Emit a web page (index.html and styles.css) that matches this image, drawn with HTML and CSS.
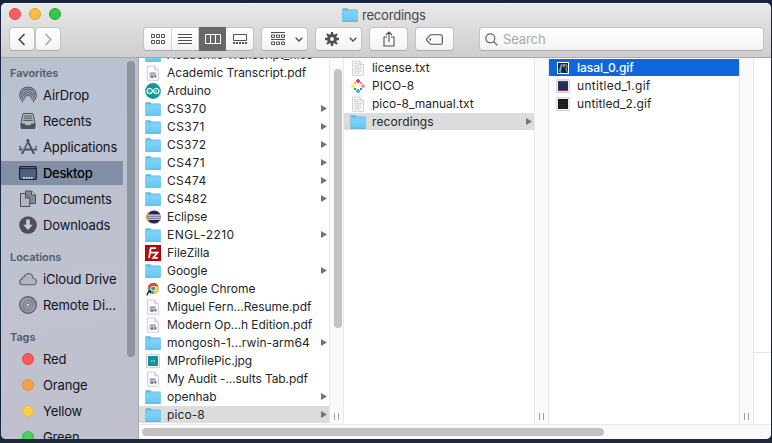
FILE: index.html
```html
<!DOCTYPE html>
<html lang="en">
<head>
<meta charset="utf-8">
<title>recordings</title>
<link rel="stylesheet" href="styles.css">
</head>
<body>
<svg class="defs" width="0" height="0" aria-hidden="true">
  <defs>
    <linearGradient id="fg" x1="0" y1="0" x2="0" y2="1"><stop offset="0" stop-color="#7fd4fa"/><stop offset="1" stop-color="#68c8f6"/></linearGradient>
    <linearGradient id="dg" x1="0" y1="0" x2="1" y2="1"><stop offset="0" stop-color="#a8acb6"/><stop offset=".5" stop-color="#858993"/><stop offset="1" stop-color="#a8acb6"/></linearGradient>
    <symbol id="folder" viewBox="0 0 16 16"><path d="M.3 14V2.2Q.3 1.3 1.2 1.3H5.3L6.6 2.6H15Q15.7 2.6 15.7 3.4V14Q15.7 14.6 15 14.6H1Q.3 14.6.3 14Z" fill="#59b7e6"/><path d="M.8 4.2H15.5V13.4Q15.5 13.9 15 13.9H1.2Q.8 13.9.8 13.4Z" fill="url(#fg)"/><path d="M.4 3.7H15.6" stroke="#93d9f6" stroke-width=".7"/><path d="M.4 14.3H15.6" stroke="#4ba5d1" stroke-width=".7"/></symbol>
    <symbol id="pdf" viewBox="0 0 16 16"><path d="M2.5 1H9.7L13.5 4.8V15.3H2.5Z" fill="#fbfbfb" stroke="#c6c6c6" stroke-width=".8"/><path d="M9.7 1V4.8H13.5" fill="#e6e6e6" stroke="#c2c2c2" stroke-width=".7"/><path d="M4.4 9.6L5 7.5H10.6V9.6Z" fill="#7f9bd0"/><path d="M4.4 9.4H11.6V12H4.4Z" fill="#c3c5cb"/><path d="M5.6 10.4H8.2V12.9H5.6Z" fill="#75777d"/><path d="M9.2 10.2H11.4V12.6H9.2Z" fill="#6583c0"/></symbol>
    <symbol id="txt" viewBox="0 0 16 16"><path d="M2.5 1H9.7L13.5 4.8V15.3H2.5Z" fill="#fafafa" stroke="#c6c6c6" stroke-width=".8"/><path d="M9.7 1V4.8H13.5" fill="#e8e8e8" stroke="#c6c6c6" stroke-width=".7"/><path d="M4.3 3.5H8M4.3 5.4H8.5M4.3 7.3H11.7M4.3 9.2H11M4.3 11.1H11.7M4.3 13H10" stroke="#c3c3c3" stroke-width=".9" stroke-dasharray="2.3 .4"/></symbol>
    <symbol id="arduino" viewBox="0 0 16 16"><circle cx="8" cy="8" r="7.9" fill="#12979c"/><path d="M8 8C6.5 5.9 5.8 5.4 4.7 5.4A2.6 2.6 0 0 0 4.7 10.6C5.8 10.6 6.5 10.1 8 8C9.5 5.9 10.2 5.4 11.3 5.4A2.6 2.6 0 0 1 11.3 10.6C10.2 10.6 9.5 10.1 8 8Z" fill="none" stroke="#e5f7f7" stroke-width="1.3"/><path d="M3.8 8H5.5M10.4 8H12.2M11.3 7.1V8.9" stroke="#e5f7f7" stroke-width=".7"/></symbol>
    <symbol id="eclipse" viewBox="0 0 16 16"><path d="M7 1.7A7 6.4 0 0 0 7 14.4L5 12V4Z" fill="#f49a38"/><circle cx="9.2" cy="8" r="6.6" fill="#2c2255"/><path d="M3 6.1H15.4M2.8 8.1H15.6M3 10.1H15.4" stroke="#e9e7f2" stroke-width="1.05"/></symbol>
    <symbol id="filezilla" viewBox="0 0 16 16"><path d="M0 0H16V16H0Z" fill="#b50c10"/><path d="M.3.3H15.7V15.7H.3Z" fill="none" stroke="#960408" stroke-width=".7"/><path d="M4.1 12.8L5.7 3.1H11.1M4.8 7.7H8.5M8.3 7.7H12.4L8.2 12.9H12.8" fill="none" stroke="#fff" stroke-width="1.8"/></symbol>
    <symbol id="chrome" viewBox="0 0 16 16"><circle cx="8.2" cy="7.6" r="5.6" fill="#43a853"/><path d="M8.2 7.6L3 5.4A5.6 5.6 0 0 1 13.4 5.3H8.2Z" fill="#df4935"/><path d="M8.2 5.3H13.3A5.6 5.6 0 0 1 8 13.2L10.3 8.9Z" fill="#f8cc3b"/><circle cx="8.2" cy="7.6" r="2.7" fill="#fff"/><circle cx="8.2" cy="7.6" r="2" fill="#4284ee"/><path d="M1 8.8H6.4V15H1Z" fill="#fff"/><path d="M2.2 14.4Q2 11.6 4.8 10.6M3 9.8H5.6V12.6" fill="none" stroke="#171717" stroke-width="1.2"/></symbol>
    <symbol id="profile" viewBox="0 0 16 16"><path d="M1.6 1.7H14.4V14.7H1.6Z" fill="#fff" stroke="#bfbfbf" stroke-width=".8"/><path d="M3 3H13V13H3Z" fill="#16909a"/><path d="M6.6 9.1V7L8 8.6L9.4 7V9.1" fill="none" stroke="#9bdce0" stroke-width=".7"/></symbol>
    <symbol id="pico" viewBox="0 0 14 14"><path d="M6 0H8V1H9V3H8V4H6V3H5V1H6Z" fill="#f04058"/><path d="M3 3H5V5H3Z" fill="#ffa3a0"/><path d="M9 3H11V5H9Z" fill="#f58b53"/><path d="M1 5H3V6H4V8H3V9H1V8H0V6H1Z" fill="#fff04b"/><path d="M11 5H13V6H14V8H13V9H11V8H10V6H11Z" fill="#f394bd"/><path d="M3 9H5V11H3Z" fill="#13b84b"/><path d="M9 9H11V11H9Z" fill="#796696"/><path d="M6 10H8V11H9V13H8V14H6V13H5V11H6Z" fill="#3db6ef"/></symbol>
    <symbol id="gif0" viewBox="0 0 16 16"><path d="M2 2H14V14H2Z" fill="#fff"/><path d="M3 3H13V13H3Z" fill="#152735"/><path d="M4 12L6.5 4L5.5 13M10.5 4L12 6L11 9L12.4 12.5" fill="none" stroke="#6ca9c6" stroke-width="1.1"/><path d="M7.6 4H10V7H7.6Z" fill="#ab8e7f"/></symbol>
    <symbol id="gif1" viewBox="0 0 16 16"><path d="M1.8 1.8H14.2V14.5H1.8Z" fill="#fff" stroke="#b3b3b3" stroke-width=".7"/><path d="M3 3H13V13H3Z" fill="#213057"/><path d="M3 3.4H13M3 12.6H13" stroke="#b72b5b" stroke-width=".9"/></symbol>
    <symbol id="gif2" viewBox="0 0 16 16"><path d="M1.8 1.8H14.2V14.5H1.8Z" fill="#fff" stroke="#b3b3b3" stroke-width=".7"/><path d="M3 3H13V13H3Z" fill="#17191d"/><path d="M4 5.5H12M4 8.5H11M5 11H12" stroke="#2c3235" stroke-width="1" stroke-dasharray="2 1"/></symbol>
    <symbol id="arrow" viewBox="0 0 6 7"><path d="M0 0L6 3.5L0 7Z" fill="#747474"/></symbol>
  </defs>
</svg>
<div class="window">
  <header class="chrome">
    <div class="titlebar">
      <div class="lights"><i class="close"></i><i class="minimize"></i><i class="maximize"></i></div>
      <div class="title"><svg class="ficon"><use href="#folder"/></svg><span>recordings</span></div>
    </div>
    <div class="toolbar">
      <div class="nav">
        <button class="btn"><svg width="8" height="13" viewBox="0 0 8 13"><path d="M6.5 1L1.2 6.5L6.5 12" fill="none" stroke="#484848" stroke-width="1.6"/></svg></button>
        <button class="btn"><svg width="8" height="13" viewBox="0 0 8 13"><path d="M1.5 1L6.8 6.5L1.5 12" fill="none" stroke="#a6a6a6" stroke-width="1.5"/></svg></button>
      </div>
      <div class="segments">
        <button><svg width="14" height="10" viewBox="0 0 14 10"><path d="M.5.5H3.5V3.5H.5ZM5.5.5H8.5V3.5H5.5ZM10.5 .5H13.5V3.5H10.5ZM.5 6.5H3.5V9.5H.5ZM5.5 6.5H8.5V9.5H5.5ZM10.5 6.5H13.5V9.5H10.5Z" fill="none" stroke="#505050"/></svg></button>
        <button><svg width="14" height="10" viewBox="0 0 14 10"><path d="M0 .5H14M0 3.5H14M0 6.5H14M0 9.5H14" stroke="#505050"/></svg></button>
        <button class="active"><svg width="16" height="10" viewBox="0 0 16 10"><path d="M.5.5H15.5V9.5H.5ZM5.5.5V9.5M10.5.5V9.5" fill="none" stroke="#fff"/></svg></button>
        <button><svg width="14" height="10" viewBox="0 0 14 10"><path d="M.5.5H13.5V6.5H.5Z" fill="none" stroke="#505050"/><path d="M0 9H14" stroke="#505050" stroke-width="2" stroke-dasharray="2 1"/></svg></button>
      </div>
      <button class="btn menu group"><svg width="14" height="14" viewBox="0 0 14 14"><path d="M0 .5H14M0 7.5H14" stroke="#505050"/><path d="M.5 3H3.5V5.5H.5ZM5.5 3H8.5V5.5H5.5ZM10.5 3H13.5V5.5H10.5ZM.5 10H3.5V12.5H.5ZM5.5 10H8.5V12.5H5.5ZM10.5 10H13.5V12.5H10.5Z" fill="none" stroke="#505050"/></svg><svg width="8" height="5" viewBox="0 0 8 5"><path d="M.7.7L4 4L7.3.7" fill="none" stroke="#505050" stroke-width="1.4"/></svg></button>
      <button class="btn menu gear"><svg width="14" height="14" viewBox="-7 -7 14 14"><circle r="3.4" fill="none" stroke="#505050" stroke-width="3"/><path d="M0-7V-4M0 7V4M-7 0H-4M7 0H4M-5-5L-3-3M5 5L3 3M-5 5L-3 3M5-5L3-3" stroke="#505050" stroke-width="2.3"/></svg><svg width="8" height="5" viewBox="0 0 8 5"><path d="M.7.7L4 4L7.3.7" fill="none" stroke="#505050" stroke-width="1.4"/></svg></button>
      <button class="btn share"><svg width="12" height="16" viewBox="0 0 12 16"><path d="M4 6H1V15H11V6H8M6 11V1M3 4L6 1L9 4" fill="none" stroke="#505050" stroke-width="1.1"/></svg></button>
      <button class="btn tag"><svg width="17" height="11" viewBox="0 0 17 11"><path d="M4.5.7H15Q16.3.7 16.3 2V9Q16.3 10.3 15 10.3H4.5L.8 6.3Q.3 5.5.8 4.7Z" fill="none" stroke="#505050" stroke-width="1.1"/><circle cx="4.2" cy="5.5" r=".9" fill="#505050"/></svg></button>
      <div class="search"><svg width="13" height="13" viewBox="0 0 13 13"><circle cx="5.3" cy="5.3" r="4.5" fill="none" stroke="#666" stroke-width="1.2"/><path d="M8.6 8.6L12.3 12.3" stroke="#666" stroke-width="1.3"/></svg><span>Search</span></div>
    </div>
  </header>
  <div class="body">
    <aside class="sidebar">
      <nav>
        <h2 class="first">Favorites</h2>
        <a><svg viewBox="0 0 18 18"><g fill="none" stroke="#4b505c" stroke-width="1.1"><path d="M4.1 15.8A8.2 8.2 0 1 1 13.9 15.8"/><path d="M5.3 14A6.2 6.2 0 1 1 12.7 14"/><path d="M6.4 12.2A4.2 4.2 0 1 1 11.6 12.2"/><path d="M7.5 10.6A2.3 2.3 0 1 1 10.5 10.6"/></g><circle cx="9" cy="9" r="1" fill="#4b505c"/></svg><span>AirDrop</span></a>
        <a><svg viewBox="0 0 18 18"><path d="M4 1.5H14L16 11.5V15.5Q16 16.5 15 16.5H3Q2 16.5 2 15.5V11.5Z" fill="#b2b7c4" stroke="#4b505c"/><path d="M2 11.5H5.5L6.5 13.3H11.5L12.5 11.5H16V16.5H2Z" fill="#4b505c"/><path d="M5 4H13M4.7 6.2H13.3M4.3 8.4H13.7" stroke="#4b505c"/></svg><span>Recents</span></a>
        <a><svg viewBox="0 0 18 18"><path d="M9.8 1.5L3 16M8 1.5L15 16" stroke="#4b505c" stroke-width="2"/><path d="M0 11.5H18" stroke="#4b505c" stroke-width="2" stroke-dasharray="3.5 1.2 8.5 1.2"/><path d="M0 8.2L2 9.6M18 8.2L16 9.6" stroke="#4b505c" stroke-width="1.2"/><path d="M8 4L4 13" stroke="#b8bdca" stroke-width=".6"/></svg><span>Applications</span></a>
        <a class="selected"><svg viewBox="0 0 18 18"><rect x=".6" y="2.5" width="16.8" height="13" rx="1.3" fill="#526179" stroke="#18243a" stroke-width="1.2"/><path d="M1 4.7H17" stroke="#18243a"/><path d="M4 14H14" stroke="#becbdd" stroke-width="2" stroke-dasharray="1.8 .8"/></svg><span>Desktop</span></a>
        <a><svg viewBox="0 0 18 18"><path d="M6.5 1H12.5L16.5 5V13.5H6.5Z" fill="#858a96" stroke="#4b505c"/><path d="M12.5 1V5H16.5" fill="#c0c4cf" stroke="#4b505c"/><path d="M1.5 3.5H6.5L10.8 8V16.5H1.5Z" fill="#b0b5c1" stroke="#4b505c"/><path d="M6.5 3.5V8H10.8" fill="#858a96" stroke="#4b505c"/></svg><span>Documents</span></a>
        <a><svg viewBox="0 0 18 18"><circle cx="9" cy="9" r="8.8" fill="#4b505c"/><path d="M7.2 3.5H10.8V8.7H13.8L9 14L4.2 8.7H7.2Z" fill="#c9cdd8"/></svg><span>Downloads</span></a>
        <h2>Locations</h2>
        <a><svg viewBox="0 0 18 18"><path d="M4 14.7Q.6 14.7.6 12Q.6 9.7 3 9.2Q2.8 6.9 5.2 6.7Q6.6 3.5 9.7 3.5Q13.6 3.8 14 8.2Q17.4 8.7 17.4 11.5Q17.2 14.7 14 14.7Z" fill="#b1b5c1" stroke="#5a5e69" stroke-width="1.1"/></svg><span>iCloud Drive</span></a>
        <a><svg viewBox="0 0 18 18"><circle cx="9" cy="9" r="8.4" fill="url(#dg)" stroke="#555963" stroke-width="1.1"/><circle cx="9" cy="9" r="4.3" fill="#a9adb7" stroke="#6e727d" stroke-width=".9"/><circle cx="9" cy="9" r="2.2" fill="#cdd0d8" stroke="#555963"/></svg><span class="natural">Remote Di...</span></a>
        <h2>Tags</h2>
        <a><i class="dot red"></i><span>Red</span></a>
        <a><i class="dot orange"></i><span>Orange</span></a>
        <a><i class="dot yellow"></i><span>Yellow</span></a>
        <a><i class="dot green"></i><span>Green</span></a>
      </nav>
      <div class="side-thumb"></div>
    </aside>
    <main class="browser">
      <div class="columns">
        <ul class="list scrolled">
          <li><svg><use href="#folder"/></svg><span>Academic Transcript_files</span></li>
          <li><svg><use href="#pdf"/></svg><span>Academic Transcript.pdf</span></li>
          <li><svg><use href="#arduino"/></svg><span>Arduino</span></li>
          <li><svg><use href="#folder"/></svg><span class="wide">CS370</span><svg class="arrow"><use href="#arrow"/></svg></li>
          <li><svg><use href="#folder"/></svg><span class="wider">CS371</span><svg class="arrow"><use href="#arrow"/></svg></li>
          <li><svg><use href="#folder"/></svg><span class="wide">CS372</span><svg class="arrow"><use href="#arrow"/></svg></li>
          <li><svg><use href="#folder"/></svg><span class="wider">CS471</span><svg class="arrow"><use href="#arrow"/></svg></li>
          <li><svg><use href="#folder"/></svg><span class="wide">CS474</span><svg class="arrow"><use href="#arrow"/></svg></li>
          <li><svg><use href="#folder"/></svg><span class="wide">CS482</span><svg class="arrow"><use href="#arrow"/></svg></li>
          <li><svg><use href="#eclipse"/></svg><span>Eclipse</span></li>
          <li><svg><use href="#folder"/></svg><span class="wider">ENGL-2210</span><svg class="arrow"><use href="#arrow"/></svg></li>
          <li><svg><use href="#filezilla"/></svg><span>FileZilla</span></li>
          <li><svg><use href="#folder"/></svg><span>Google</span><svg class="arrow"><use href="#arrow"/></svg></li>
          <li><svg><use href="#chrome"/></svg><span>Google Chrome</span></li>
          <li><svg><use href="#pdf"/></svg><span>Miguel Fern...Resume.pdf</span></li>
          <li><svg><use href="#pdf"/></svg><span>Modern Op...h Edition.pdf</span></li>
          <li><svg><use href="#folder"/></svg><span class="normal">mongosh-1...rwin-arm64</span><svg class="arrow"><use href="#arrow"/></svg></li>
          <li><svg><use href="#profile"/></svg><span>MProfilePic.jpg</span></li>
          <li><svg><use href="#pdf"/></svg><span class="tight">My Audit -...sults Tab.pdf</span></li>
          <li><svg><use href="#folder"/></svg><span>openhab</span><svg class="arrow"><use href="#arrow"/></svg></li>
          <li class="path"><svg><use href="#folder"/></svg><span class="normal">pico-8</span><svg class="arrow"><use href="#arrow"/></svg></li>
        </ul>
        <div class="gutter"><div class="thumb"></div><div class="grip"></div></div>
        <ul class="list">
          <li><svg><use href="#txt"/></svg><span>license.txt</span></li>
          <li><svg class="pico"><use href="#pico"/></svg><span class="normal">PICO-8</span></li>
          <li><svg><use href="#txt"/></svg><span>pico-8_manual.txt</span></li>
          <li class="path"><svg><use href="#folder"/></svg><span class="normal">recordings</span><svg class="arrow"><use href="#arrow"/></svg></li>
        </ul>
        <div class="gutter"><div class="grip"></div></div>
        <ul class="list">
          <li class="current"><svg><use href="#gif0"/></svg><span>lasal_0.gif</span></li>
          <li><svg><use href="#gif1"/></svg><span class="wide">untitled_1.gif</span></li>
          <li><svg><use href="#gif2"/></svg><span class="normal">untitled_2.gif</span></li>
        </ul>
        <div class="gutter"><div class="grip"></div></div>
        <div class="preview"></div>
      </div>
      <div class="hscroll"><div class="hthumb"></div></div>
    </main>
  </div>
</div>
</body>
</html>
```
FILE: styles.css
```css
* { box-sizing: border-box; }
body {
  margin: 0;
  height: 443px;
  padding: 3px 1px 4px;
  overflow: hidden;
  background: linear-gradient(to bottom, #16243f 0, #1b2947 50%, #141f33 92%, #1d2b3d 100%);
  font-family: Inter, "Liberation Sans", sans-serif;
}
.defs { position: absolute; }
svg { display: block; flex: none; }
ul, h2 { margin: 0; padding: 0; list-style: none; }
button { border: 0; padding: 0; margin: 0; font: inherit; display: flex; align-items: center; justify-content: center; }

.window { width: 770px; height: 436px; border-radius: 5px; overflow: hidden; display: flex; flex-direction: column; background: #fff; }
.chrome { height: 55px; flex: none; background: linear-gradient(#e8e8e8, #cecece); border-top: 1px solid #f5f5f5; border-bottom: 1px solid #a8a8a8; }
.titlebar { height: 23px; display: grid; grid-template-columns: 333px 1fr; }
.lights { display: flex; gap: 8px; padding: 4px 0 0 8px; }
.lights i { width: 12px; height: 12px; border-radius: 50%; border: 1px solid #e2463f; background: #fc605c; }
.lights .minimize { background: #fdbc40; border-color: #dfa035; }
.lights .maximize { background: #34c84a; border-color: #24a732; }
.title { display: flex; align-items: center; gap: 4px; height: 22px; padding-left: 8px; font-size: 13px; letter-spacing: -.2px; color: #474747; }
.ficon { width: 16px; height: 16px; }
.toolbar { display: flex; padding-left: 8px; height: 24px; }
.btn, .segments, .search { height: 24px; border: 1px solid #c3c3c3; border-bottom-color: #acacac; border-radius: 4px; background: linear-gradient(#fff, #f3f3f3); }
.nav { display: flex; gap: 0; width: 134px; }
.nav .btn { width: 26px; }
.segments { display: flex; width: 111px; margin-right: 7px; }
.segments button { width: 27px; height: 22px; background: none; border-right: 1px solid #d2d2d2; }
.segments button:first-child { width: 28px; padding-left: 1px; }
.segments button:last-child { border: 0; }
.segments .active { background: #686868; height: 24px; margin-top: -1px; border: 0; }
.menu { width: 47px; margin-right: 7px; gap: 10px; padding-left: 5px; }
.share, .tag { width: 39px; margin-right: 7px; }
.tag { margin-right: 25px; }
.search { width: 285px; display: flex; align-items: center; padding-left: 5px; gap: 5px; font-size: 13px; letter-spacing: -.1px; color: #aaa; }

.body { flex: 1; display: flex; min-height: 0; }
.sidebar { width: 138px; display: flex; overflow: hidden; background: linear-gradient(170deg, #b9c1d1, #bfc2cf 60%, #c0c0cd); border-right: 1px solid #a5a9b4; }
.sidebar nav { width: 122px; flex: none; }
.sidebar h2 { height: 28px; padding: 9px 0 0 9px; font-size: 11px; line-height: 19px; font-weight: 600; letter-spacing: -.08px; color: #535a68; }
.sidebar h2.first { height: 25px; padding-top: 6px; }
.sidebar a { display: flex; align-items: center; height: 24px; margin-bottom: 2px; padding-left: 18px; font-size: 13px; letter-spacing: -.14px; color: #10131b; white-space: nowrap; }
.sidebar .natural { letter-spacing: -.1px; }
.sidebar a svg { width: 18px; height: 18px; margin-right: 6px; }
.sidebar .selected { background: #8290a7; font-weight: 500; letter-spacing: -.3px; color: #000; }
.dot { width: 12px; height: 12px; border-radius: 50%; margin: 0 9px 0 3px; border: 1px solid; flex: none; }
.red { background: #fb5b57; border-color: #ef4343; }
.orange { background: #f5a04c; border-color: #eb8c34; }
.yellow { background: #f6cb52; border-color: #edba35; }
.green { background: #50cc65; border-color: #35b94a; }
.side-thumb { width: 8px; height: 296px; margin: 3px 0 0 4px; border-radius: 4px; background: #8e939e; }

.browser { flex: 1; min-width: 0; display: flex; flex-direction: column; }
.columns { height: 366px; display: flex; overflow: hidden; }
.list { width: 190px; flex: none; padding-top: 1px; }
.list.scrolled { margin-top: -13px; }
.list li { display: flex; align-items: center; height: 17px; margin-bottom: 1px; padding: 0 2px 0 6px; font-size: 12px; letter-spacing: -.04px; color: #262626; white-space: nowrap; }
.list .tight { letter-spacing: -.1px; }
.list .normal { letter-spacing: .1px; }
.list .wide { letter-spacing: .3px; }
.list .wider { letter-spacing: .45px; }
.list li svg { width: 16px; height: 16px; margin-right: 6px; }
.list li svg.arrow { width: 6px; height: 7px; margin: 0 0 0 auto; }
.list li svg.pico { width: 14px; height: 14px; margin: 0 7px 0 1px; }
.list .path { background: #dcdcdc; }
.list .current { background: #1067dd; color: #fff; font-weight: 500; }
.gutter { width: 15px; flex: none; display: flex; flex-direction: column; align-items: center; border: solid #e8e8e8; border-width: 0 1px; background: #fafafa; }
.thumb { width: 8px; height: 259px; margin: 11px 0 0 2px; border-radius: 4px; background: #c2c2c2; }
.grip { width: 5px; height: 7px; margin: auto 0 4px; border: solid #a0a0a0; border-width: 0 1px; }
.preview { flex: 1; height: 295px; border-bottom: 1px solid #e4e4e4; }
.hscroll { height: 15px; border-top: 1px solid #e8e8e8; background: #fafafa; padding: 3px 0 0 3px; }
.hthumb { width: 462px; height: 8px; border-radius: 4px; background: #c2c2c2; }
```
